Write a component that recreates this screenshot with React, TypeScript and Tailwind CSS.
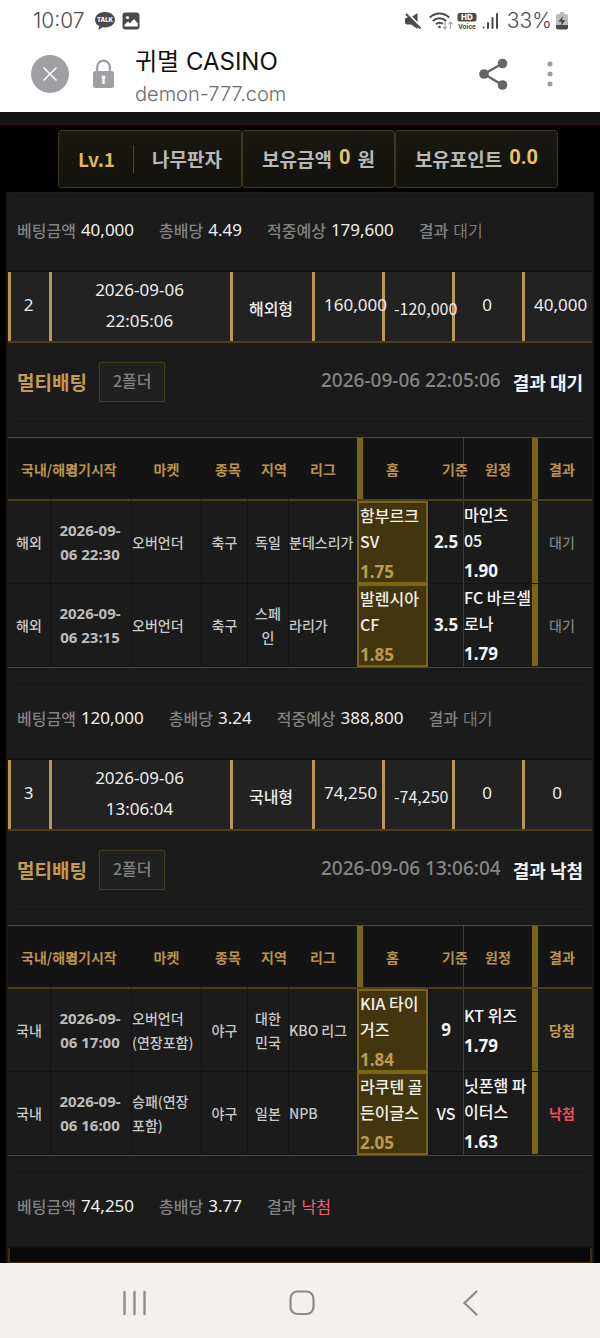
import { Fragment } from "react";

type Pick = {
  origin: string;
  start: string;
  market: string;
  sport: string;
  region: string;
  league: string;
  home: string;
  homeOdds: string;
  line: string;
  away: string;
  awayOdds: string;
  result: "대기" | "당첨" | "낙첨";
};

type Bet = {
  no: number;
  date: string;
  time: string;
  kind: string;
  before: string;
  change: string;
  bonus: string;
  after: string;
  result: string;
  picks: Pick[];
  summary: Total[];
};

type Total = { label: string; value: string; tone?: "wait" | "lose" };

const firstSummary: Total[] = [
  { label: "베팅금액", value: "40,000" },
  { label: "총배당", value: "4.49" },
  { label: "적중예상", value: "179,600" },
  { label: "결과", value: "대기", tone: "wait" },
];

const bets: Bet[] = [
  {
    no: 2,
    date: "2026-09-06",
    time: "22:05:06",
    kind: "해외형",
    before: "160,000",
    change: "-120,000",
    bonus: "0",
    after: "40,000",
    result: "대기",
    picks: [
      {
        origin: "해외",
        start: "2026-09-\n06 22:30",
        market: "오버언더",
        sport: "축구",
        region: "독일",
        league: "분데스리가",
        home: "함부르크\nSV",
        homeOdds: "1.75",
        line: "2.5",
        away: "마인츠\n05",
        awayOdds: "1.90",
        result: "대기",
      },
      {
        origin: "해외",
        start: "2026-09-\n06 23:15",
        market: "오버언더",
        sport: "축구",
        region: "스페\n인",
        league: "라리가",
        home: "발렌시아\nCF",
        homeOdds: "1.85",
        line: "3.5",
        away: "FC 바르셀\n로나",
        awayOdds: "1.79",
        result: "대기",
      },
    ],
    summary: [
      { label: "베팅금액", value: "120,000" },
      { label: "총배당", value: "3.24" },
      { label: "적중예상", value: "388,800" },
      { label: "결과", value: "대기", tone: "wait" },
    ],
  },
  {
    no: 3,
    date: "2026-09-06",
    time: "13:06:04",
    kind: "국내형",
    before: "74,250",
    change: "-74,250",
    bonus: "0",
    after: "0",
    result: "낙첨",
    picks: [
      {
        origin: "국내",
        start: "2026-09-\n06 17:00",
        market: "오버언더\n(연장포함)",
        sport: "야구",
        region: "대한\n민국",
        league: "KBO 리그",
        home: "KIA 타이\n거즈",
        homeOdds: "1.84",
        line: "9",
        away: "KT 위즈",
        awayOdds: "1.79",
        result: "당첨",
      },
      {
        origin: "국내",
        start: "2026-09-\n06 16:00",
        market: "승패(연장\n포함)",
        sport: "야구",
        region: "일본",
        league: "NPB",
        home: "라쿠텐 골\n든이글스",
        homeOdds: "2.05",
        line: "VS",
        away: "닛폰햄 파\n이터스",
        awayOdds: "1.63",
        result: "낙첨",
      },
    ],
    summary: [
      { label: "베팅금액", value: "74,250" },
      { label: "총배당", value: "3.77" },
      { label: "결과", value: "낙첨", tone: "lose" },
    ],
  },
];

const kr = "font-['Noto_Sans_CJK_KR',sans-serif]";
const num = "font-['Noto_Sans','Noto_Sans_CJK_KR',sans-serif]";

const resultColor = {
  대기: "text-[#808080]",
  당첨: "text-[#c39c52]",
  낙첨: "text-[#e8505a]",
};

function StatusBar() {
  return (
    <div className="flex h-10 items-center pl-[33px] pr-8 pt-px text-[#4d4d4d]">
      <span className="font-['Inter',sans-serif] text-[21px] font-light leading-6">10:07</span>
      <svg className="ml-2.5 h-5 w-[22px]" viewBox="0 0 22 20" aria-label="KakaoTalk">
        <path d="M11 1C5.3 1 1 4.4 1 8.7c0 2.8 1.7 5 4.3 6.4L4.2 19l4.3-2.7c.8.1 1.6.2 2.5.2 5.7 0 10-3.4 10-7.7S16.7 1 11 1Z" fill="#4a4a4a" />
        <text x="11" y="11" textAnchor="middle" fontSize="6" fontWeight="800" fill="#fff" fontFamily="Inter, sans-serif">TALK</text>
      </svg>
      <svg className="ml-1.5 h-[18px] w-[18px]" viewBox="0 0 18 18" aria-label="Picture">
        <rect x="0.5" y="0.5" width="17" height="17" rx="3" fill="#4a4a4a" />
        <circle cx="5.5" cy="5.5" r="1.6" fill="#fff" />
        <path d="M2.5 12.8 6 9.5l2 1.8L12 7l3.7 4.2v3.3H2.5Z" fill="#fff" />
      </svg>

      <svg className="ml-auto h-[18px] w-[18px]" viewBox="0 0 18 18" fill="#4a4a4a" aria-label="Muted">
        <path d="M1 6.5 4.5 5l9 9v3L7 12.5H3l-2-1Z" />
        <path d="M7.5 5 13.5 1v10Z" />
        <path d="m3 .5 14 14" stroke="#fff" strokeWidth="1.6" />
        <path d="m2 2 14.5 14.5" stroke="#4a4a4a" strokeWidth="2" />
      </svg>
      <svg className="ml-[7px] h-[18px] w-6" viewBox="0 0 24 18" fill="none" stroke="#4a4a4a" strokeWidth="1.9" aria-label="Wi-Fi">
        <path d="M.8 5.5C6.5.2 14.5.2 20.2 5.500" />
        <path d="M3.8 9c4-3.6 9.4-3.6 13.4 0" />
        <path d="M7 12.3c2-1.8 4.8-2 7-.3" />
        <circle cx="10.5" cy="15" r="1.3" fill="#4a4a4a" stroke="none" />
        <path d="M16 10v7m-2-2.3 2 2.3 2-2.3M21.5 17v-7m-2 2.3 2-2.3 2 2.3" stroke="#aaa" strokeWidth="1.2" />
      </svg>
      <svg className="ml-1 h-[18px] w-5" viewBox="0 0 20 18" aria-label="HD Voice">
        <rect x="0.5" y="1" width="19" height="8.5" rx="2" fill="#4a4a4a" />
        <text x="10" y="8" textAnchor="middle" fontSize="8" fontWeight="800" fill="#fff" fontFamily="Inter, sans-serif">HD</text>
        <text x="10" y="17" textAnchor="middle" fontSize="7" fontWeight="700" fill="#4a4a4a" fontFamily="Roboto, sans-serif">Voice</text>
      </svg>
      <svg className="ml-1 h-[18px] w-[18px]" viewBox="0 0 18 18" stroke="#4a4a4a" strokeLinecap="round" strokeWidth="2" aria-label="Signal">
        <path d="M2.5 15.5v.1M7 11v5M11.5 6v10M16 2v14" />
      </svg>
      <span className="ml-2 font-['Inter',sans-serif] text-[21px] font-light leading-6">33%</span>
      <svg className="ml-1 h-[18px] w-3" viewBox="0 0 12 18" aria-label="Charging">
        <path d="M4 0h4v2H4ZM2 2h8q2 0 2 2v10H0V4q0-2 2-2Z" fill="#bcbcbc" />
        <path d="M0 13h12v2.500q0 2-2 2H2q-2 0-2-2Z" fill="#4a4a4a" />
        <path d="M6.8 4 2.5 9.800h3L5 14l4.500-6H6.300Z" fill="#4a4a4a" />
      </svg>
    </div>
  );
}

function BrowserBar() {
  return (
    <header className="flex h-[72px] items-center pb-1 pl-[31px] pr-11">
      <button aria-label="Close" className="flex size-[38px] items-center justify-center rounded-full bg-[#a09fa4]">
        <svg className="size-4" viewBox="0 0 16 16" stroke="#fff" strokeWidth="1.5" strokeLinecap="round">
          <path d="M2 2l12 12M14 2 2 14" />
        </svg>
      </button>
      <svg className="ml-6 h-[30px] w-[21px]" viewBox="0 0 21 30" aria-label="Secure">
        <path d="M4.2 13V8a6.3 6.3 0 0 1 12.6 0v5" fill="none" stroke="#a09fa4" strokeWidth="2.2" />
        <rect y="12" width="21" height="17" rx="2.5" fill="#a09fa4" />
        <path d="M10.5 16.5a2 2 0 0 1 1.2 3.6V25H9.3v-4.900a2 2 0 0 1 1.200-3.600Z" fill="#fff" />
      </svg>
      <div className="ml-[21px] pt-2">
        <h1 className="font-['Inter','Noto_Sans_CJK_KR',sans-serif] text-[24px] leading-8 text-[#111]">귀멸 CASINO</h1>
        <p className="font-['Inter',sans-serif] text-[20px] font-light leading-8 text-[#6c6c6c]">demon-777.com</p>
      </div>
      <button aria-label="Share" className="ml-auto">
        <svg className="h-8 w-[30px]" viewBox="0 0 30 32" fill="#656565">
          <path d="M24.5 5.5 6 16l18.5 11" fill="none" stroke="#656565" strokeWidth="2.4" />
          <circle cx="24.5" cy="5.5" r="4.8" />
          <circle cx="6" cy="16" r="4.8" />
          <circle cx="24.5" cy="27" r="4.8" />
        </svg>
      </button>
      <button aria-label="More" className="ml-8">
        <svg className="h-7 w-4" viewBox="0 0 16 28" fill="#9c9c9c">
          <circle cx="10" cy="4" r="2.5" />
          <circle cx="10" cy="14" r="2.5" />
          <circle cx="10" cy="24" r="2.5" />
        </svg>
      </button>
    </header>
  );
}

function AccountBar() {
  const box = "flex h-[58px] items-center rounded-[3px] border border-[#40361f] bg-linear-to-b from-[#191812] to-[#12110b] px-[19px]";
  const amount = "pb-1 font-['Roboto',sans-serif] text-[20px] font-bold text-[#e8c566]";
  return (
    <div className={`${kr} flex justify-center pb-1 pl-4 pt-[5px] text-[19px] font-bold text-[#b8b8b8]`}>
      <div className={`${box} gap-[18px]`}>
        <span className="text-[#dfb955]">Lv.1</span>
        <span className="h-7 w-px bg-[#5a451f]" />
        <span>나무판자</span>
      </div>
      <div className={`${box} gap-[7px]`}>
        <span>보유금액</span>
        <span className={amount}>0</span>
        <span>원</span>
      </div>
      <div className={`${box} gap-[7px]`}>
        <span>보유포인트</span>
        <span className={amount}>0.0</span>
      </div>
    </div>
  );
}

function Summary({ totals }: { totals: Total[] }) {
  return (
    <div className="border-b-2 border-[#131313] px-[9px]">
      <dl className="flex h-[74px] gap-[25px] border-t border-[#151515] pt-[19px] leading-7">
        {totals.map((total) => (
          <div key={total.label} className="flex gap-[5px]">
            <dt className={`${kr} text-[16px] font-medium text-[#828282]`}>{total.label}</dt>
            <dd
              className={
                total.tone === "lose"
                  ? `${kr} text-[16px] text-[#f0606a]`
                  : total.tone === "wait"
                    ? `${kr} text-[16px] text-[#7c7c7c]`
                    : `${num} text-[17px] text-[#f0f0f0]`
              }
            >
              {total.value}
            </dd>
          </div>
        ))}
      </dl>
    </div>
  );
}

function BetRow({ bet }: { bet: Bet }) {
  const cell = `${num} border-l-[3px] border-[#b8975a] pb-1 pl-[9px] pr-3 text-[17px]`;
  const krCell = `${kr} border-l-[3px] border-[#b8975a] pl-[9px] pr-3 pt-0.5 text-[16px]`;
  return (
    <table className="w-full table-fixed border-separate border-spacing-0 border-b-2 border-[#4d4119] bg-[#222] text-center text-[#ececec]">
      <colgroup>
        <col className="w-[41px]" />
        <col className="w-[181px]" />
        <col className="w-[82px]" />
        <col className="w-[70px]" />
        <col className="w-[70px]" />
        <col className="w-[70px]" />
        <col className="w-[70px]" />
      </colgroup>
      <tbody>
        <tr className="h-[69px] whitespace-nowrap">
          <td className={cell}>{bet.no}</td>
          <td className={`${cell} leading-[31px]`}>
            {bet.date}
            <br />
            {bet.time}
          </td>
          <td className={`${krCell} font-medium`}>{bet.kind}</td>
          <td className={cell}>{bet.before}</td>
          <td className={krCell}>{bet.change}</td>
          <td className={cell}>{bet.bonus}</td>
          <td className={cell}>{bet.after}</td>
        </tr>
      </tbody>
    </table>
  );
}

function PickTable({ picks }: { picks: Pick[] }) {
  const th = "h-[63px] border-b-2 border-b-[#4d4119] px-[13px] pt-0.5 font-bold";
  const td = "border-b border-b-[#131313]";
  const dark = "border-l border-l-[#121212]";
  const gold = "border-l border-l-[#4a3f18]";
  const odds = `${num} pt-[5px] text-[17px] font-bold leading-[25px]`;
  return (
    <table className={`${kr} w-full table-fixed border-separate border-spacing-0 border-y border-[#5a4b1a] text-center text-[14px] font-medium text-[#c8c8c8]`}>
      <colgroup>
        <col className="w-[42px]" />
        <col className="w-[81px]" />
        <col className="w-[70px]" />
        <col className="w-[46px]" />
        <col className="w-[41px]" />
        <col className="w-[69px]" />
        <col className="w-[71px]" />
        <col className="w-[35px]" />
        <col className="w-[69px]" />
        <col className="w-[60px]" />
      </colgroup>
      <thead className="whitespace-nowrap bg-[#141414] text-[#b8924b]">
        <tr>
          <th className={th}>국내/해외</th>
          <th className={`${th} ${dark}`}>경기시작</th>
          <th className={`${th} ${dark}`}>마켓</th>
          <th className={`${th} ${dark}`}>종목</th>
          <th className={`${th} ${dark}`}>지역</th>
          <th className={`${th} ${dark}`}>리그</th>
          <th className={`${th} shadow-[inset_6px_0_0_#7c6417]`}>홈</th>
          <th className={`${th} ${dark}`}>기준</th>
          <th className={`${th} ${gold}`}>원정</th>
          <th className={`${th} shadow-[inset_6px_0_0_#7c6417]`}>결과</th>
        </tr>
      </thead>
      <tbody>
        {picks.map((pick) => (
          <tr key={pick.home} className="h-[83px] whitespace-pre leading-6">
            <td className={td}>{pick.origin}</td>
            <td className={`${td} ${dark} ${num} pr-0.5 text-[15px] font-bold text-[#bcbcbc]`}>{pick.start}</td>
            <td className={`${td} ${dark} text-left`}>{pick.market}</td>
            <td className={`${td} ${dark}`}>{pick.sport}</td>
            <td className={`${td} ${dark}`}>{pick.region}</td>
            <td className={`${td} ${dark} text-left`}>{pick.league}</td>
            <td className="bg-[#43360f] pl-[3px] text-left shadow-[inset_0_0_0_2px_#7c6417]">
              <div className="text-[16px] leading-[26px] text-[#f2efe6]">{pick.home}</div>
              <div className={`${odds} text-[#bd9a53]`}>{pick.homeOdds}</div>
            </td>
            {pick.line === "VS" ? (
              <td className={`${td} ${dark} text-[16px] text-[#f0f0f0]`}>{pick.line}</td>
            ) : (
              <td className={`${td} ${dark} ${num} text-[17px] font-bold text-[#f0f0f0]`}>{pick.line}</td>
            )}
            <td className={`${td} ${gold} text-left text-[#f5f5f5]`}>
              <div className="text-[16px] leading-[26px]">{pick.away}</div>
              <div className={odds}>{pick.awayOdds}</div>
            </td>
            <td className={`${td} shadow-[inset_6px_0_0_#7c6417] ${resultColor[pick.result]} ${pick.result === "대기" ? "" : "font-bold"}`}>{pick.result}</td>
          </tr>
        ))}
      </tbody>
    </table>
  );
}

function BetDetail({ bet }: { bet: Bet }) {
  return (
    <section>
      <div className="px-[9px] pb-[15px]">
        <div className={`${kr} flex h-[79px] items-center border-b border-[#151515]`}>
          <h2 className="text-[19px] font-bold text-[#c39c52]">멀티배팅</h2>
          <span className="ml-3 flex h-10 items-center border border-[#433b1c] bg-[#202020] px-[13px] pb-1 text-[16px] font-medium text-[#808080]">
            2폴더
          </span>
          <time className={`${num} ml-auto pb-1 text-[19px] font-medium text-[#858585]`}>
            {bet.date} {bet.time}
          </time>
          <strong className="ml-3 text-[18px] font-bold text-[#f2f2f2]">결과 {bet.result}</strong>
        </div>
      </div>
      <PickTable picks={bet.picks} />
      <div className="pt-4">
        <Summary totals={bet.summary} />
      </div>
    </section>
  );
}

function NavBar() {
  return (
    <nav className="flex h-[75px] items-center justify-between bg-[#f4f0ed] px-[118px] pt-1 text-[#8e8b8a]">
      <button aria-label="Recent apps">
        <svg className="size-8" viewBox="0 0 32 32" stroke="currentColor" strokeWidth="2.4" strokeLinecap="round">
          <path d="M6.5 5v22M16.5 5v22M26.5 5v22" />
        </svg>
      </button>
      <button aria-label="Home">
        <svg className="size-8" viewBox="0 0 32 32" fill="none" stroke="currentColor" strokeWidth="2.2">
          <rect x="6.5" y="4.5" width="23" height="22.5" rx="7" />
        </svg>
      </button>
      <button aria-label="Back">
        <svg className="size-8" viewBox="0 0 32 32" fill="none" stroke="currentColor" strokeWidth="2.2" strokeLinecap="round">
          <path d="M26.5 4.5 14.5 16l12 11.5" />
        </svg>
      </button>
    </nav>
  );
}

export default function App() {
  return (
    <div className="w-full bg-white">
      <StatusBar />
      <BrowserBar />
      <div className="bg-black">
        <div className="h-[13px] border-b border-[#3c0d10] bg-[#141414]" />
        <AccountBar />
        <main className="mx-1.5 border-x-2 border-[#1c160a] bg-[#1b1b1b]">
          <div className="pt-1">
            <Summary totals={firstSummary} />
          </div>
          {bets.map((bet) => (
            <Fragment key={bet.no}>
              <BetRow bet={bet} />
              <BetDetail bet={bet} />
            </Fragment>
          ))}
          <div className="h-[15px] border-x-2 border-b border-[#3a2c10] bg-[#090909]" />
        </main>
      </div>
      <NavBar />
    </div>
  );
}
